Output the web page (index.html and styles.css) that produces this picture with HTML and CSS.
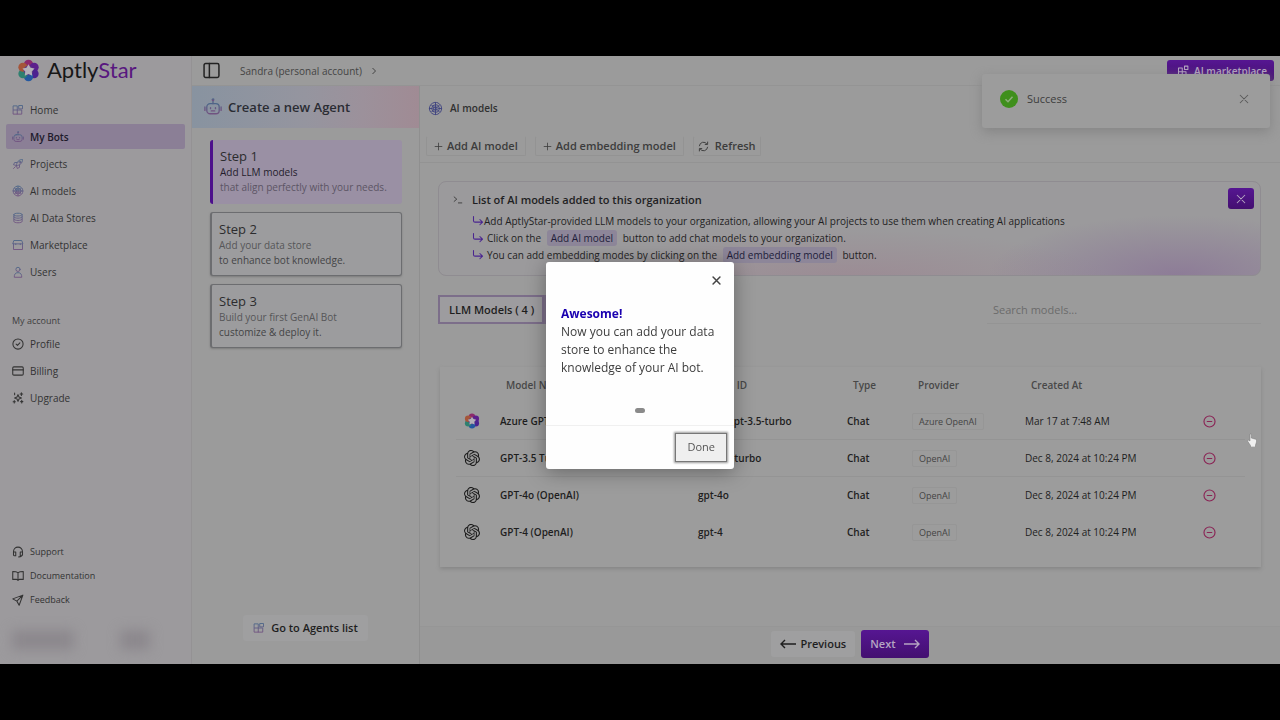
FILE: index.html
```html
<!DOCTYPE html>
<html lang="en">
<head>
    <meta charset="UTF-8">
    <title>AptlyStar</title>
    <link rel="stylesheet" href="styles.css">
</head>
<body>
<svg class="sprite" aria-hidden="true">
    <defs>
        <linearGradient id="tint" x1="0" y1="0" x2="0" y2="1">
            <stop offset="0" stop-color="#4c6688"/>
            <stop offset="1" stop-color="#715280"/>
        </linearGradient>
    </defs>
    <symbol id="star" viewBox="0 0 24 24">
        <circle cx="12" cy="5.5" r="4.8" fill="#8c2a6c"/>
        <circle cx="17.8" cy="8.6" r="4.8" fill="#5c1f8c"/>
        <circle cx="17.8" cy="15.4" r="4.8" fill="#4c2290"/>
        <circle cx="12" cy="18.5" r="4.8" fill="#2458a0"/>
        <circle cx="6.2" cy="15.4" r="4.8" fill="#2f8070"/>
        <circle cx="6.2" cy="8.6" r="4.8" fill="#a5553a"/>
        <circle cx="12" cy="12" r="5" fill="#5c3a86"/>
        <path d="M12 5.5l2.1 3.600 4.200.9-2.900 3.100.5 4.300-3.900-1.800-3.900 1.800.5-4.300-2.900-3.100 4.200-.9z" fill="#b4b0b8"/>
    </symbol>
    <symbol id="openai" viewBox="0 0 24 24">
        <path d="M22.2819 9.8211a5.9847 5.9847 0 0 0-.5157-4.9108 6.0462 6.0462 0 0 0-6.5098-2.9A6.0651 6.0651 0 0 0 4.9807 4.1818a5.9847 5.9847 0 0 0-3.9977 2.9 6.0462 6.0462 0 0 0 .7427 7.0966 5.98 5.98 0 0 0 .511 4.9107 6.051 6.051 0 0 0 6.5146 2.9001A5.9847 5.9847 0 0 0 13.2599 24a6.0557 6.0557 0 0 0 5.7718-4.2058 5.9894 5.9894 0 0 0 3.9977-2.9001 6.0557 6.0557 0 0 0-.7475-7.0729zm-9.022 12.6081a4.4755 4.4755 0 0 1-2.8764-1.0408l.1419-.0804 4.7783-2.7582a.7948.7948 0 0 0 .3927-.6813v-6.7369l2.02 1.1686a.071.071 0 0 1 .038.052v5.5826a4.504 4.504 0 0 1-4.4945 4.4944zm-9.6607-4.1254a4.4708 4.4708 0 0 1-.5346-3.0137l.142.0852 4.783 2.7582a.7712.7712 0 0 0 .7806 0l5.8428-3.3685v2.3324a.0804.0804 0 0 1-.0332.0615L9.74 19.9502a4.4992 4.4992 0 0 1-6.1408-1.6464zM2.3408 7.8956a4.485 4.485 0 0 1 2.3655-1.9728V11.6a.7664.7664 0 0 0 .3879.6765l5.8144 3.3543-2.0201 1.1685a.0757.0757 0 0 1-.071 0l-4.8303-2.7865A4.504 4.504 0 0 1 2.3408 7.872zm16.5963 3.8558L13.1038 8.364 15.1192 7.2a.0757.0757 0 0 1 .071 0l4.8303 2.7913a4.4944 4.4944 0 0 1-.6765 8.1042v-5.6772a.79.79 0 0 0-.407-.667zm2.0107-3.0231l-.142-.0852-4.7735-2.7818a.7759.7759 0 0 0-.7854 0L9.409 9.2297V6.8974a.0662.0662 0 0 1 .0284-.0615l4.8303-2.7866a4.4992 4.4992 0 0 1 6.6802 4.66zM8.3065 12.863l-2.02-1.1638a.0804.0804 0 0 1-.038-.0567V6.0742a4.4992 4.4992 0 0 1 7.3757-3.4537l-.142.0805L8.704 5.459a.7948.7948 0 0 0-.3927.6813zm1.0976-2.3654l2.602-1.4998 2.6069 1.4998v2.9994l-2.5974 1.4997-2.6067-1.4997Z" fill="#1c1c1c"/>
    </symbol>
    <symbol id="grid" viewBox="0 0 16 16"><path d="M2 2.5h5v11H2zM2 8h11v5.5H7M9.5 2H14v4.500H9.500z"/></symbol>
    <symbol id="bot" viewBox="0 0 16 16"><rect x="2.5" y="5" width="11" height="9" rx="3"/><path d="M8 5V2M.8 8v3M15.200 8v3M5.800 8.500v1M10.200 8.500v1M6.500 11.500h3"/><circle cx="8" cy="1.500" r=".7"/></symbol>
    <symbol id="rocket" viewBox="0 0 16 16"><path d="M6 10C6 5 9.500 2 14 2c0 4.500-3 8-8 8zM6.500 6H3.500L2 9l4 1 1 4 3-1.500v-3M2 14l2.500-2.500"/><circle cx="10.500" cy="5.500" r="1.200"/></symbol>
    <symbol id="brain" viewBox="0 0 16 16"><circle cx="8" cy="8" r="6.500" stroke-dasharray="3.400 .7"/><circle cx="8" cy="8" r="4"/><path d="M8 1.500v13M4 4.500l2.500 2.500M12 4.500L9.500 7M4 11.500L6.500 9M12 11.500L9.500 9M1.500 8h3M11.500 8h3"/><rect x="6.500" y="6.500" width="3" height="3"/></symbol>
    <symbol id="data" viewBox="0 0 16 16"><path d="M2.500 3.500v9c0 2.500 11 2.500 11 0v-9c0-2.500-11-2.500-11 0c0 2.500 11 2.500 11 0M2.500 6.500c0 2.500 11 2.500 11 0M2.500 9.500c0 2.500 11 2.500 11 0"/></symbol>
    <symbol id="shop" viewBox="0 0 16 16"><path d="M2 6.500v7.500h12V6.500M1.500 6.500h13L13 2H3zM5 6.500v1M11 6.500v1"/></symbol>
    <symbol id="user" viewBox="0 0 16 16"><circle cx="8" cy="4.500" r="2.800"/><path d="M3 14.500c0-3.500 1.500-5 3.500-5.500h3c2 .5 3.500 2 3.500 5.500z"/></symbol>
    <symbol id="check" viewBox="0 0 16 16"><circle cx="8" cy="8" r="6.800"/><path d="M5.500 8.200l1.800 1.600 3.200-3.300"/></symbol>
    <symbol id="card" viewBox="0 0 16 16"><rect x="1" y="2.500" width="14" height="11" rx="1.500"/><path d="M1 6.500h14"/></symbol>
    <symbol id="spark" viewBox="0 0 16 16"><path d="M8 3.500l1.300 3.200L12.500 8 9.300 9.300 8 12.500 6.700 9.300 3.500 8l3.200-1.300zM12.500 1v3.500M10.800 2.700h3.500M3.500 1.500v2M13 11v3.500M11.500 12.800h3M3 11.500v3M1.500 13h3"/></symbol>
    <symbol id="phones" viewBox="0 0 16 16"><path d="M2 10V7.500a6 6 0 0 1 12 0V10c0 3-2 4.500-5 4.500M2 8h3v5H3.500A1.500 1.500 0 0 1 2 11.500zM14 8h-3v5h1.500A1.500 1.500 0 0 0 14 11.500z"/></symbol>
    <symbol id="book" viewBox="0 0 16 16"><path d="M8 3.500C6.500 2.500 4 2 1 2v10.500h5c1 0 2 .8 2 1.500 0-.7 1-1.500 2-1.500h5V2c-3 0-5.500.5-7 1.500zM8 3.500V14"/></symbol>
    <symbol id="send" viewBox="0 0 16 16"><path d="M14.500 1.500L1 6.500l5.500 3 3 5.500zM14.500 1.500l-8 8"/></symbol>
    <symbol id="close" viewBox="0 0 16 16"><path d="M3 3l10 10M13 3L3 13"/></symbol>
    <symbol id="plus" viewBox="0 0 16 16"><path d="M8 2v12M2 8h12"/></symbol>
    <symbol id="turn" viewBox="0 0 16 16"><path d="M2 2v5.500a2 2 0 0 0 2 2h10M10.500 6l3.500 3.500-3.500 3.500"/></symbol>
    <symbol id="minus" viewBox="0 0 16 16"><circle cx="8" cy="8" r="6.800"/><path d="M5.200 8h5.600"/></symbol>
</svg>

<div class="app">
    <aside class="sidebar">
        <a class="logo" href="#"><svg class="logo-icon"><use href="#star"/></svg><span>Aptly<b>Star</b></span></a>
        <nav class="menu">
            <a href="#"><svg class="icon tint"><use href="#grid"/></svg>Home</a>
            <a href="#" class="active"><svg class="icon tint"><use href="#bot"/></svg>My Bots</a>
            <a href="#"><svg class="icon tint"><use href="#rocket"/></svg>Projects</a>
            <a href="#"><svg class="icon tint"><use href="#brain"/></svg>AI models</a>
            <a href="#"><svg class="icon tint"><use href="#data"/></svg>AI Data Stores</a>
            <a href="#"><svg class="icon tint"><use href="#shop"/></svg>Marketplace</a>
            <a href="#"><svg class="icon tint"><use href="#user"/></svg>Users</a>
        </nav>
        <div class="menu-title">My account</div>
        <nav class="menu">
            <a href="#"><svg class="icon"><use href="#check"/></svg>Profile</a>
            <a href="#"><svg class="icon"><use href="#card"/></svg>Billing</a>
            <a href="#"><svg class="icon"><use href="#spark"/></svg>Upgrade</a>
        </nav>
        <nav class="menu menu-small">
            <a href="#"><svg class="icon"><use href="#phones"/></svg>Support</a>
            <a href="#"><svg class="icon"><use href="#book"/></svg>Documentation</a>
            <a href="#"><svg class="icon"><use href="#send"/></svg>Feedback</a>
        </nav>
        <div class="account"><i></i><i></i></div>
    </aside>

    <div class="main">
        <header class="topbar">
            <button class="toggle" aria-label="Toggle sidebar"><svg class="icon" viewBox="0 0 16 16"><rect x="1" y="1.500" width="14" height="13" rx="1.500"/><path d="M6 1.500v13"/></svg></button>
            <a class="crumb" href="#">Sandra (personal account)</a>
            <svg class="crumb-arrow" viewBox="0 0 8 8"><path d="M2.500 1l3 3-3 3"/></svg>
            <button class="btn-purple market"><svg class="icon" viewBox="0 0 16 16"><path d="M2 4h5v10H2zM2 9h10v5H7M10 1.500h4.500V6H10z"/></svg>AI marketplace</button>
        </header>

        <div class="body">
            <section class="steps">
                <h2 class="steps-title"><svg class="icon tint"><use href="#bot"/></svg>Create a new Agent</h2>
                <div class="steps-list">
                    <div class="step current">
                        <h3>Step 1</h3>
                        <p class="dark">Add LLM models</p>
                        <p>that align perfectly with your needs.</p>
                    </div>
                    <div class="step">
                        <h3>Step 2</h3>
                        <p>Add your data store</p>
                        <p class="mid">to enhance bot knowledge.</p>
                    </div>
                    <div class="step">
                        <h3>Step 3</h3>
                        <p>Build your first GenAI Bot</p>
                        <p class="mid">customize &amp; deploy it.</p>
                    </div>
                </div>
                <button class="btn-plain agents"><svg class="icon tint"><use href="#grid"/></svg>Go to Agents list</button>
            </section>

            <section class="content">
                <h2 class="content-title"><svg class="icon"><use href="#brain"/></svg>AI models</h2>
                <div class="toolbar">
                    <button><svg class="icon"><use href="#plus"/></svg>Add AI model</button>
                    <button><svg class="icon"><use href="#plus"/></svg>Add embedding model</button>
                    <button class="refresh"><svg class="icon" viewBox="0 0 16 16"><path d="M2 7a6 6 0 0 1 11-2.500M14 9a6 6 0 0 1-11 2.500M14 1.500v3.500h-3.500M2 14.500V11h3.500"/></svg>Refresh</button>
                </div>

                <div class="panel">
                    <div class="info">
                        <svg class="prompt" viewBox="0 0 12 12"><path d="M1 2l3.500 3L1 8M6 9.500h5"/></svg>
                        <div class="info-text">
                            <h3>List of AI models added to this organization</h3>
                            <p><svg class="icon"><use href="#turn"/></svg>Add AptlyStar-provided LLM models to your organization, allowing your AI projects to use them when creating AI applications</p>
                            <p class="spaced"><svg class="icon"><use href="#turn"/></svg>Click on the <mark>Add AI model</mark> button to add chat models to your organization.</p>
                            <p class="spaced"><svg class="icon"><use href="#turn"/></svg>You can add embedding modes by clicking on the <mark>Add embedding model</mark> button.</p>
                        </div>
                        <button class="btn-purple info-close" aria-label="Close"><svg class="icon"><use href="#close"/></svg></button>
                    </div>

                    <div class="filters">
                        <div class="tabs"><button>LLM Models ( 4 )</button></div>
                        <input type="text" class="search" placeholder="Search models..." aria-label="Search models">
                    </div>

                    <div class="table-card">
                        <table class="models">
                            <colgroup>
                                <col class="col-icon"><col class="col-name"><col class="col-id"><col class="col-type"><col class="col-provider"><col><col class="col-action">
                            </colgroup>
                            <thead>
                            <tr><th></th><th>Model Name</th><th>Model ID</th><th>Type</th><th>Provider</th><th>Created At</th><th></th></tr>
                            </thead>
                            <tbody>
                            <tr>
                                <td><svg class="model-icon"><use href="#star"/></svg></td>
                                <td>Azure GPT-3.5 Turbo</td><td>azure-gpt-3.5-turbo</td><td>Chat</td>
                                <td><span class="tag">Azure OpenAI</span></td><td class="date">Mar 17 at 7:48 AM</td>
                                <td><button class="remove" aria-label="Remove"><svg class="icon"><use href="#minus"/></svg></button></td>
                            </tr>
                            <tr>
                                <td><svg class="model-icon"><use href="#openai"/></svg></td>
                                <td>GPT-3.5 Turbo</td><td>gpt-3.5-turbo</td><td>Chat</td>
                                <td><span class="tag">OpenAI</span></td><td class="date">Dec 8, 2024 at 10:24 PM</td>
                                <td><button class="remove" aria-label="Remove"><svg class="icon"><use href="#minus"/></svg></button></td>
                            </tr>
                            <tr>
                                <td><svg class="model-icon"><use href="#openai"/></svg></td>
                                <td>GPT-4o (OpenAI)</td><td>gpt-4o</td><td>Chat</td>
                                <td><span class="tag">OpenAI</span></td><td class="date">Dec 8, 2024 at 10:24 PM</td>
                                <td><button class="remove" aria-label="Remove"><svg class="icon"><use href="#minus"/></svg></button></td>
                            </tr>
                            <tr>
                                <td><svg class="model-icon"><use href="#openai"/></svg></td>
                                <td>GPT-4 (OpenAI)</td><td>gpt-4</td><td>Chat</td>
                                <td><span class="tag">OpenAI</span></td><td class="date">Dec 8, 2024 at 10:24 PM</td>
                                <td><button class="remove" aria-label="Remove"><svg class="icon"><use href="#minus"/></svg></button></td>
                            </tr>
                            </tbody>
                        </table>
                    </div>
                </div>

                <footer class="pager">
                    <button class="btn-plain"><svg class="arrow" viewBox="0 0 16 10"><path d="M16 5H1M5 1L1 5l4 4"/></svg>Previous</button>
                    <button class="btn-purple next">Next<svg class="arrow" viewBox="0 0 16 10"><path d="M0 5h15M11 1l4 4-4 4"/></svg></button>
                </footer>
            </section>
        </div>
    </div>

    <div class="toast" role="status">
        <svg class="toast-icon" viewBox="0 0 18 18"><circle cx="9" cy="9" r="9" fill="#3f8f1c"/><path d="M5.500 9.200l2.500 2.500 4.500-5" fill="none" stroke="#8fae7c" stroke-width="1.500"/></svg>
        <span>Success</span>
        <button aria-label="Close"><svg class="icon"><use href="#close"/></svg></button>
    </div>
    <svg class="cursor" viewBox="0 0 10 14"><path d="M3 1v7L1.500 7 .5 8l3 4.500V14h5v-2L9.500 9V6.500L4.300 5V1z" fill="#efefef" stroke="#777" stroke-width=".5"/></svg>
</div>

<!-- tour popup -->
<div class="overlay">
    <div class="tour" role="dialog" aria-labelledby="tour-title">
        <button class="tour-close" aria-label="Close"><svg class="icon"><use href="#close"/></svg></button>
        <div class="tour-text">
            <strong id="tour-title">Awesome!</strong>
            <p>Now you can add your data store to enhance the knowledge of your AI bot.</p>
        </div>
        <div class="tour-dots"><i></i></div>
        <div class="tour-footer"><button class="done">Done</button></div>
    </div>
</div>
</body>
</html>
```

FILE: styles.css
```css
* {
    box-sizing: border-box;
}
body {
    margin: 0;
    padding: 56px 0;
    background: #000;
    font-family: "Open Sans", "Noto Sans", sans-serif;
    font-size: 10px;
    line-height: 16px;
    color: #303030;
}
h2, h3, p {
    margin: 0;
}
a {
    color: inherit;
    text-decoration: none;
}
button, input {
    font: inherit;
    color: inherit;
    margin: 0;
    padding: 0;
    border: 0;
    background: none;
}
button {
    display: flex;
    align-items: center;
    cursor: pointer;
}
.sprite {
    position: absolute;
    width: 0;
    height: 0;
}
.icon {
    flex: none;
    width: 12px;
    height: 12px;
    fill: none;
    stroke: currentColor;
    stroke-width: 1.4;
    stroke-linecap: round;
    stroke-linejoin: round;
}
.tint {
    stroke: url(#tint);
    stroke-width: 1.2;
}
.app {
    position: relative;
    display: flex;
    min-height: calc(100vh - 112px);
    background: #9b9b9b;
}

/* sidebar */
.sidebar {
    flex: none;
    display: flex;
    flex-direction: column;
    width: 192px;
    padding: 0 6px 8px;
    background: #9c9a9d;
    border-right: 1px solid #949294;
}
.logo {
    display: flex;
    align-items: center;
    gap: 7px;
    height: 28px;
    margin-bottom: 13px;
    padding-left: 11px;
    font-family: Lato, sans-serif;
    font-size: 22px;
    color: #171717;
}
.logo b {
    font-weight: 400;
    color: #58177f;
}
.logo-icon {
    width: 23px;
    height: 23px;
}
.menu a {
    display: flex;
    align-items: center;
    gap: 6px;
    height: 25px;
    margin-bottom: 2px;
    padding-left: 6px;
    color: #333;
}
.menu a.active {
    background: #8b7f96;
    color: #201a2a;
    font-weight: 600;
    border-radius: 2px;
}
.menu-title {
    margin-top: 27px;
    margin-bottom: 2px;
    padding: 0 6px;
    font-size: 9px;
    color: #404040;
}
.menu-small {
    margin-top: auto;
    font-size: 9px;
}
.menu-small a {
    height: 24px;
    margin: 0;
}
.account {
    display: flex;
    justify-content: space-between;
    width: 150px;
    height: 32px;
    margin-top: 12px;
    padding: 6px;
    filter: blur(6px);
}
.account i {
    width: 62px;
    background: #8c888d;
}
.account i + i {
    width: 30px;
}

/* top bar */
.main {
    flex: 1;
    min-width: 0;
    display: flex;
    flex-direction: column;
}
.topbar {
    display: flex;
    align-items: center;
    height: 30px;
    padding: 0 6px 0 11px;
    border-bottom: 1px solid #949494;
    color: #444;
}
.toggle .icon {
    width: 17px;
    height: 17px;
    color: #222;
}
.crumb {
    margin-left: 20px;
}
.crumb-arrow {
    width: 8px;
    height: 8px;
    margin-left: 8px;
    fill: none;
    stroke: #444;
}
.btn-purple {
    justify-content: center;
    gap: 5px;
    background: linear-gradient(#561692, #430f70);
    border-radius: 3px;
    color: #b5a5c2;
    font-weight: 600;
}
.market {
    align-self: flex-start;
    margin-top: 4px;
    margin-left: auto;
    height: 21px;
    padding: 0 7px 0 10px;
}

/* steps */
.body {
    flex: 1;
    display: flex;
    min-height: 0;
}
.steps {
    flex: none;
    display: flex;
    flex-direction: column;
    width: 228px;
    border-right: 1px solid #8f8f8f;
}
.steps-title {
    display: flex;
    align-items: center;
    gap: 6px;
    height: 42px;
    padding-left: 12px;
    background: linear-gradient(90deg, #8893a0, #95959f 50%, #9c919b 75%, #a08b94);
    font-size: 13px;
    font-weight: 600;
    color: #2a2c33;
}
.steps-title .icon {
    width: 18px;
    height: 18px;
}
.steps-list {
    display: flex;
    flex-direction: column;
    gap: 8px;
    padding: 12px 17px 0 18px;
}
.step {
    height: 64px;
    padding: 7px 7px;
    border: 1px solid #6c6d70;
    border-left-width: 2px;
    border-radius: 3px;
    background: #9c9c9e;
    box-shadow: 0 1px 2px #7c7c7c;
    line-height: 15px;
    color: #565658;
}
.step h3 {
    line-height: 18px;
    font-size: 13px;
    font-weight: 400;
    color: #2c2c2e;
}
.step.current {
    border: 0;
    border-left: 3px solid #4c0f8c;
    background: #9a90a4;
    box-shadow: none;
    color: #5c5564;
}
.step .dark {
    color: #241d2c;
}
.step .mid {
    color: #444446;
}
.btn-plain {
    gap: 6px;
    padding: 0 10px;
    height: 26px;
    background: #9f9fa0;
    border-radius: 3px;
    font-size: 11px;
    font-weight: 600;
    color: #1e1e1e;
}
.agents {
    align-self: center;
    margin-top: auto;
    margin-bottom: 23px;
}

/* content */
.content {
    flex: 1;
    min-width: 0;
    display: flex;
    flex-direction: column;
}
.content-title {
    display: flex;
    align-items: center;
    gap: 7px;
    height: 44px;
    padding-left: 8px;
    font-size: 10px;
    font-weight: 600;
    color: #303030;
}
.content-title .icon {
    width: 15px;
    height: 15px;
    color: #3f4380;
    stroke-width: 1;
}
.toolbar {
    display: flex;
    align-items: center;
    gap: 9px;
    height: 33px;
    padding-left: 6px;
    border-bottom: 1px solid #939393;
    font-size: 11px;
    font-weight: 600;
    color: #3c3c3c;
}
.toolbar button {
    gap: 4px;
    height: 20px;
    padding: 0 7px;
    border: 1px solid #939393;
    border-top-color: transparent;
    border-radius: 2px;
}
.toolbar .icon {
    width: 9px;
    height: 9px;
}
.toolbar .refresh {
    gap: 6px;
    padding: 0 4px;
}
.toolbar .refresh .icon {
    width: 11px;
    height: 11px;
}
.panel {
    padding: 18px 19px 0 18px;
}
.info {
    display: flex;
    align-items: flex-start;
    gap: 9px;
    height: 95px;
    padding: 6px 6px 0 14px;
    border: 1px solid #8f8c91;
    border-radius: 8px;
    background:
        radial-gradient(ellipse 190px 60px at 90% 100%, rgba(132, 104, 148, .6), transparent),
        radial-gradient(ellipse 260px 50px at 50% 105%, rgba(156, 124, 140, .5), transparent),
        #9b9a9c;
    color: #1f1f23;
}
.prompt {
    flex: none;
    width: 10px;
    height: 10px;
    margin-top: 7px;
    fill: none;
    stroke: #333;
}
.info-text {
    flex: 1;
    min-width: 0;
}
.info-text h3 {
    font-size: 11px;
    line-height: 24px;
    font-weight: 600;
}
.info-text p {
    display: flex;
    align-items: center;
    height: 17px;
    white-space: pre;
}
.info-text .spaced .icon {
    margin-right: 3px;
}
.info-text p .icon {
    color: #4a2590;
}
.info-text mark {
    margin: 0 3px;
    padding: 0 4px;
    border-radius: 3px;
    background: #8d8699;
    color: #211d3a;
}
.info-close {
    width: 26px;
    height: 21px;
}
.filters {
    display: flex;
    justify-content: space-between;
    margin-top: 19px;
    font-size: 11px;
}
.tabs {
    width: 230px;
    background: #80748c;
}
.tabs button {
    height: 29px;
    padding: 0 8px 0 9px;
    border: 2px solid #7c6e8a;
    background: #9d9c9f;
    font-weight: 600;
    color: #1e1e1e;
}
.search {
    width: 274px;
    height: 29px;
    padding: 0 6px;
    border-bottom: 1px solid #949494;
    color: #444;
}
.search::placeholder {
    color: #6b6b6b;
    opacity: 1;
}
.table-card {
    margin-top: 43px;
    margin-left: 2px;
    padding: 0 16px 16px;
    background: #9c9c9c;
    box-shadow: 0 2px 4px #868686;
}
.models {
    width: 100%;
    table-layout: fixed;
    border-spacing: 0;
    text-align: left;
    font-weight: 600;
    color: #1e1e1e;
}
.models th {
    height: 36px;
    padding: 0 6px;
    font-weight: 600;
    color: #484848;
}
.models td {
    height: 37px;
    padding: 0;
    border-bottom: 1px solid #949494;
    white-space: nowrap;
}
.models tr:nth-child(n+3) td {
    border-bottom-color: transparent;
}
.models .date {
    font-weight: 400;
}
.col-icon { width: 44px; }
.col-name { width: 198px; }
.col-id { width: 149px; }
.col-type { width: 65px; }
.col-provider { width: 113px; }
.col-action { width: 42px; }
.model-icon {
    display: block;
    width: 16px;
    height: 16px;
    margin-left: 8px;
}
.tag {
    padding: 1px 6px;
    border: 1px solid #969696;
    border-radius: 2px;
    font-size: 9px;
    font-weight: 400;
    color: #444;
}
.remove .icon {
    width: 13px;
    height: 13px;
    color: #8a2455;
}
.pager {
    display: flex;
    align-items: center;
    justify-content: center;
    gap: 6px;
    height: 38px;
    margin-top: auto;
    padding-bottom: 3px;
    border-top: 1px solid #969696;
    background: #999;
}
.arrow {
    width: 16px;
    height: 10px;
    fill: none;
    stroke: currentColor;
    stroke-width: 1.4;
}
.pager .btn-plain {
    gap: 4px;
    padding: 0 9px;
}
.next {
    gap: 8px;
    height: 28px;
    padding: 0 9px;
    font-size: 11px;
}

/* notification */
.toast {
    position: absolute;
    top: 18px;
    right: 10px;
    display: flex;
    align-items: center;
    gap: 9px;
    width: 288px;
    height: 54px;
    padding: 0 20px 4px 18px;
    border-radius: 3px;
    background: #9c9c9c;
    box-shadow: 0 4px 12px #858585;
    font-size: 11px;
    color: #3c3c3c;
}
.toast-icon {
    width: 18px;
    height: 18px;
}
.toast button {
    margin-left: auto;
    color: #5a5a5a;
}
.cursor {
    position: absolute;
    top: 377px;
    right: 23px;
    width: 10px;
    height: 14px;
}

/* tour popup */
.overlay {
    position: fixed;
    inset: 0;
    display: flex;
    align-items: center;
    justify-content: center;
    padding-top: 10px;
}
.tour {
    width: 188px;
    border-radius: 3px;
    background: #fefefe;
    box-shadow: 0 3px 20px rgba(0, 0, 0, .35);
}
.tour-close {
    margin-left: auto;
    padding: 13px 12px 11px;
    color: #444;
}
.tour-close .icon {
    width: 11px;
    height: 11px;
    stroke-width: 2.2;
}
.tour-text {
    padding: 8px 15px 0;
    font-size: 12px;
    line-height: 18px;
    color: #3d3d3d;
}
.tour-text strong {
    color: #1a00b0;
}
.tour-dots {
    display: flex;
    justify-content: center;
    padding: 31px 0 12px;
}
.tour-dots i {
    width: 10px;
    height: 5px;
    border-radius: 3px;
    background: #8a8a8a;
}
.tour-footer {
    display: flex;
    justify-content: flex-end;
    padding: 7px;
    border-top: 1px solid #f0f0f0;
}
.done {
    height: 29px;
    padding: 0 11px;
    border: 1px solid #777;
    background: #efefef;
    box-shadow: 0 0 2px 1px #999;
    font-size: 11px;
    color: #555;
}
```
